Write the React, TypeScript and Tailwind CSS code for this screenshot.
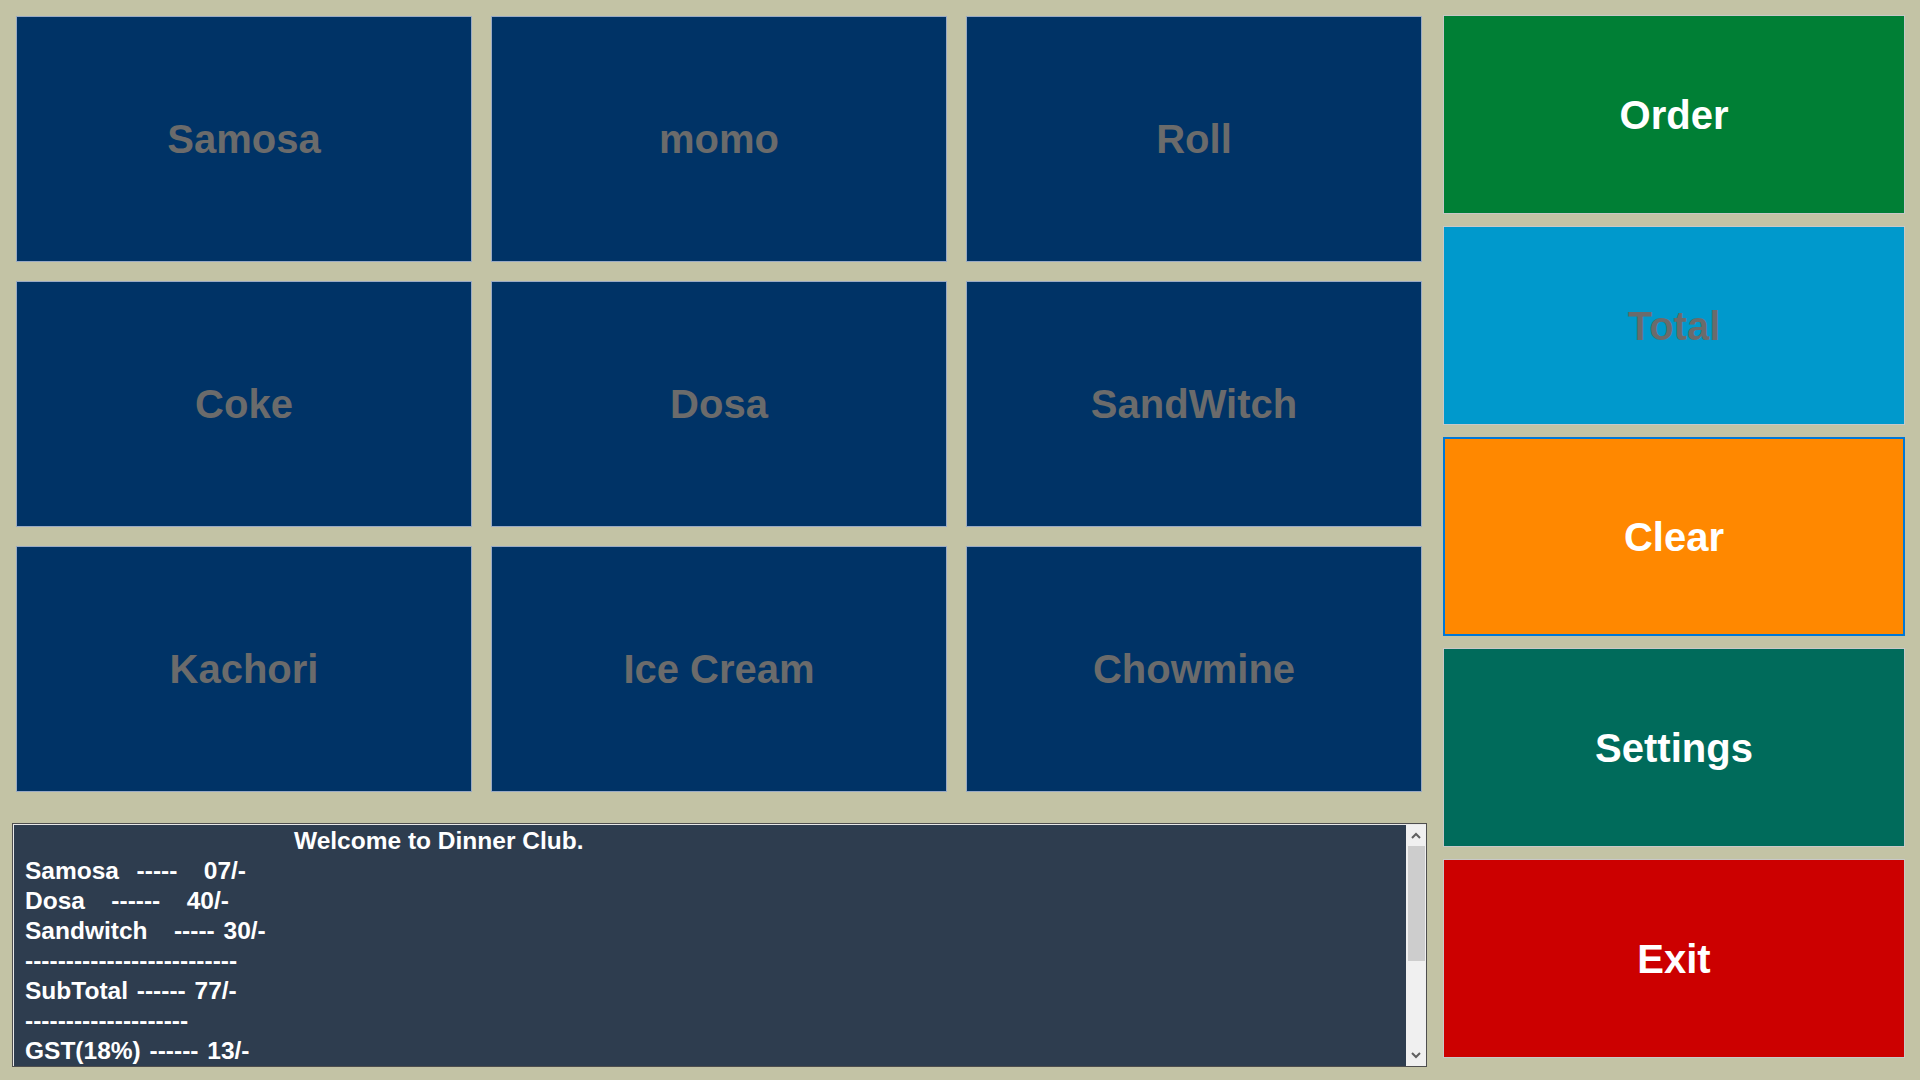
import React from "react";

const tiles = ["Samosa", "momo", "Roll", "Coke", "Dosa", "SandWitch", "Kachori", "Ice Cream", "Chowmine"];

const lines = [
  "Samosa  -----   07/-",
  "Dosa   ------   40/-",
  "Sandwitch   ----- 30/-",
  "--------------------------",
  "SubTotal ------ 77/-",
  "--------------------",
  "GST(18%) ------ 13/-",
];

export default function App() {
  return (
    <div className="w-[1920px] h-[1080px] bg-[#c3c3a5] flex font-['Liberation_Sans',Arial,sans-serif] overflow-hidden">
      <div className="flex flex-col pl-[12px] pt-[16px]">
        <div className="ml-[4px] grid grid-cols-[repeat(3,456px)] grid-rows-[repeat(3,246px)] gap-[19px]">
          {tiles.map((t) => (
            <div
              key={t}
              className="bg-[#003366] border border-[#9aaac4] flex items-center justify-center text-[40px] font-bold text-[#6b6b6b]"
            >
              {t}
            </div>
          ))}
        </div>
        <div className="mt-[31px] w-[1415px] h-[244px] border border-[#4e4e4e] flex">
          <div className="flex-1 flex border-t border-l border-[#e8e8e8]">
            <div className="flex-1 bg-[#2e3d4f] pl-[11px] pt-[1px] text-white font-bold text-[24.5px] leading-[30px] overflow-hidden whitespace-pre">
              <div className="pl-[269px]">Welcome to Dinner Club.</div>
              {lines.map((l, i) => (
                <div key={i} className="[word-spacing:2px]">
                  {l}
                </div>
              ))}
            </div>
            <div className="w-[20px] bg-[#f0f0f0] flex flex-col items-center">
              <div className="h-[21px] w-full flex items-center justify-center">
                <svg width="10" height="7" viewBox="0 0 10 7">
                  <path d="M1 6 L5 2 L9 6" stroke="#606060" strokeWidth="2" fill="none" />
                </svg>
              </div>
              <div className="w-[17px] h-[115px] bg-[#cdcdcd]" />
              <div className="flex-1" />
              <div className="h-[21px] w-full flex items-center justify-center">
                <svg width="10" height="7" viewBox="0 0 10 7">
                  <path d="M1 1 L5 5 L9 1" stroke="#606060" strokeWidth="2" fill="none" />
                </svg>
              </div>
            </div>
          </div>
        </div>
      </div>
      <div className="ml-[16px] pt-[15px] flex flex-col gap-[12px]">
        <div className="w-[462px] h-[199px] bg-[#007f35] border border-[#c8c8c8] flex items-center justify-center text-white font-bold text-[40px]">
          Order
        </div>
        <div className="w-[462px] h-[199px] bg-[#0099cc] border border-[#c8c8c8] flex items-center justify-center text-[#6b6b6b] font-bold text-[40px]">
          Total
        </div>
        <div className="w-[462px] h-[199px] bg-[#ff8800] border-2 border-[#0078d7] flex items-center justify-center text-white font-bold text-[40px]">
          Clear
        </div>
        <div className="w-[462px] h-[199px] bg-[#006b5b] border border-[#c8c8c8] flex items-center justify-center text-white font-bold text-[40px]">
          Settings
        </div>
        <div className="w-[462px] h-[199px] bg-[#cc0000] border border-[#c8c8c8] flex items-center justify-center text-white font-bold text-[40px]">
          Exit
        </div>
      </div>
    </div>
  );
}
